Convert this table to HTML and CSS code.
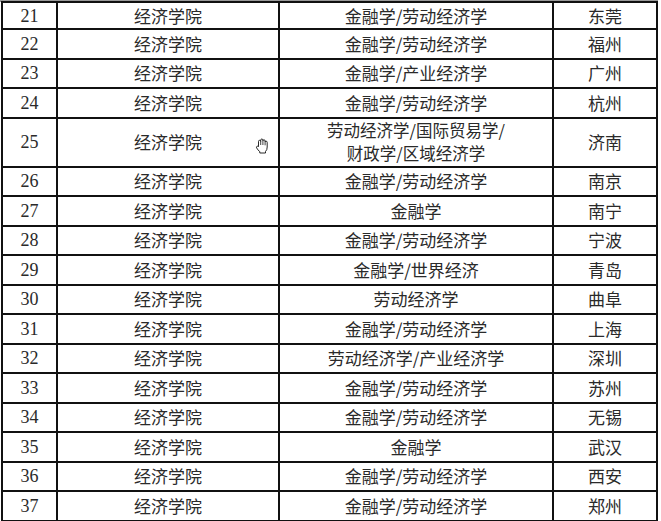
FILE: index.html
```html
<!DOCTYPE html>
<html lang="zh-CN">
<head>
<meta charset="utf-8">
<link rel="stylesheet" href="styles.css">
</head>
<body>
<div class="page">
  <div class="topstrip"></div>
  <table class="grid">
    <colgroup>
      <col class="c1"><col class="c2"><col class="c3"><col class="c4">
    </colgroup>
    <tbody>
      <tr class="first"><td class="num">21</td><td>经济学院</td><td>金融学/劳动经济学</td><td>东莞</td></tr>
      <tr><td class="num">22</td><td>经济学院</td><td>金融学/劳动经济学</td><td>福州</td></tr>
      <tr><td class="num">23</td><td>经济学院</td><td>金融学/产业经济学</td><td>广州</td></tr>
      <tr><td class="num">24</td><td>经济学院</td><td>金融学/劳动经济学</td><td>杭州</td></tr>
      <tr class="tall"><td class="num">25</td><td class="cursor-cell">经济学院<svg class="hand" viewBox="0 0 14 17" width="14" height="17"><path d="M3.5 9.5 L3.5 4.5 Q3.5 3.3 4.6 3.3 Q5.7 3.3 5.7 4.5 L5.7 3.2 Q5.7 2 6.8 2 Q7.9 2 7.9 3.2 L7.9 3.8 Q7.9 2.8 9 2.8 Q10.1 2.8 10.1 3.9 L10.1 5 Q10.1 4.2 11.1 4.2 Q12.2 4.2 12.2 5.3 L12.2 10 Q12.2 13 10.5 14.5 L10.5 16 L4.8 16 L4.8 14.6 Q2.6 13 1.6 10.8 Q1.1 9.6 2.1 9.2 Q3 8.9 3.5 9.8 Z" fill="#fff" stroke="#111" stroke-width="0.9" stroke-linejoin="round"/><path d="M5.7 4.5 L5.7 8 M7.9 3.8 L7.9 8 M10.1 5 L10.1 8.3" stroke="#111" stroke-width="0.8" fill="none"/></svg></td><td class="two"><span class="ln">劳动经济学/国际贸易学/</span><span class="ln">财政学/区域经济学</span></td><td>济南</td></tr>
      <tr><td class="num">26</td><td>经济学院</td><td>金融学/劳动经济学</td><td>南京</td></tr>
      <tr><td class="num">27</td><td>经济学院</td><td>金融学</td><td>南宁</td></tr>
      <tr><td class="num">28</td><td>经济学院</td><td>金融学/劳动经济学</td><td>宁波</td></tr>
      <tr><td class="num">29</td><td>经济学院</td><td>金融学/世界经济</td><td>青岛</td></tr>
      <tr><td class="num">30</td><td>经济学院</td><td>劳动经济学</td><td>曲阜</td></tr>
      <tr><td class="num">31</td><td>经济学院</td><td>金融学/劳动经济学</td><td>上海</td></tr>
      <tr><td class="num">32</td><td>经济学院</td><td>劳动经济学/产业经济学</td><td>深圳</td></tr>
      <tr><td class="num">33</td><td>经济学院</td><td>金融学/劳动经济学</td><td>苏州</td></tr>
      <tr><td class="num">34</td><td>经济学院</td><td>金融学/劳动经济学</td><td>无锡</td></tr>
      <tr><td class="num">35</td><td>经济学院</td><td>金融学</td><td>武汉</td></tr>
      <tr><td class="num">36</td><td>经济学院</td><td>金融学/劳动经济学</td><td>西安</td></tr>
      <tr><td class="num">37</td><td>经济学院</td><td>金融学/劳动经济学</td><td>郑州</td></tr>
    </tbody>
  </table>
</div>
</body>
</html>
```
FILE: styles.css
```css
html, body {
  margin: 0;
  padding: 0;
  background: #fff;
}
.page {
  width: 661px;
  height: 521px;
  overflow: hidden;
  padding-left: 1px;
  box-sizing: border-box;
}
.topstrip {
  height: 2px;
  background: #9a9a9a;
  width: 658px;
  margin-left: -1px;
}
.grid {
  border-collapse: collapse;
  table-layout: fixed;
  width: 657px;
  font-family: "Noto Sans CJK SC", "Liberation Serif", serif;
  font-size: 17px;
  color: #2a2a2a;
  margin-top: -1px;
}
.c1 { width: 55px; }
.c2 { width: 222px; }
.c3 { width: 274px; }
.c4 { width: 104px; }
.grid td {
  border: 2px solid #111;
  text-align: center;
  vertical-align: middle;
  padding: 0;
  height: 27.5px;
  line-height: 20px;
  white-space: nowrap;
}
.grid tr.first td {
  height: 25px;
}
.grid tr.tall td {
  height: 47px;
}
.grid td.two .ln {
  display: block;
  line-height: 23.5px;
  font-size: 16.5px;
}
.grid td.num {
  font-family: "Liberation Serif", "DejaVu Serif", serif;
  font-size: 18px;
}
.cursor-cell {
  position: relative;
}
.hand {
  position: absolute;
  left: 197px;
  top: 18px;
}
```
